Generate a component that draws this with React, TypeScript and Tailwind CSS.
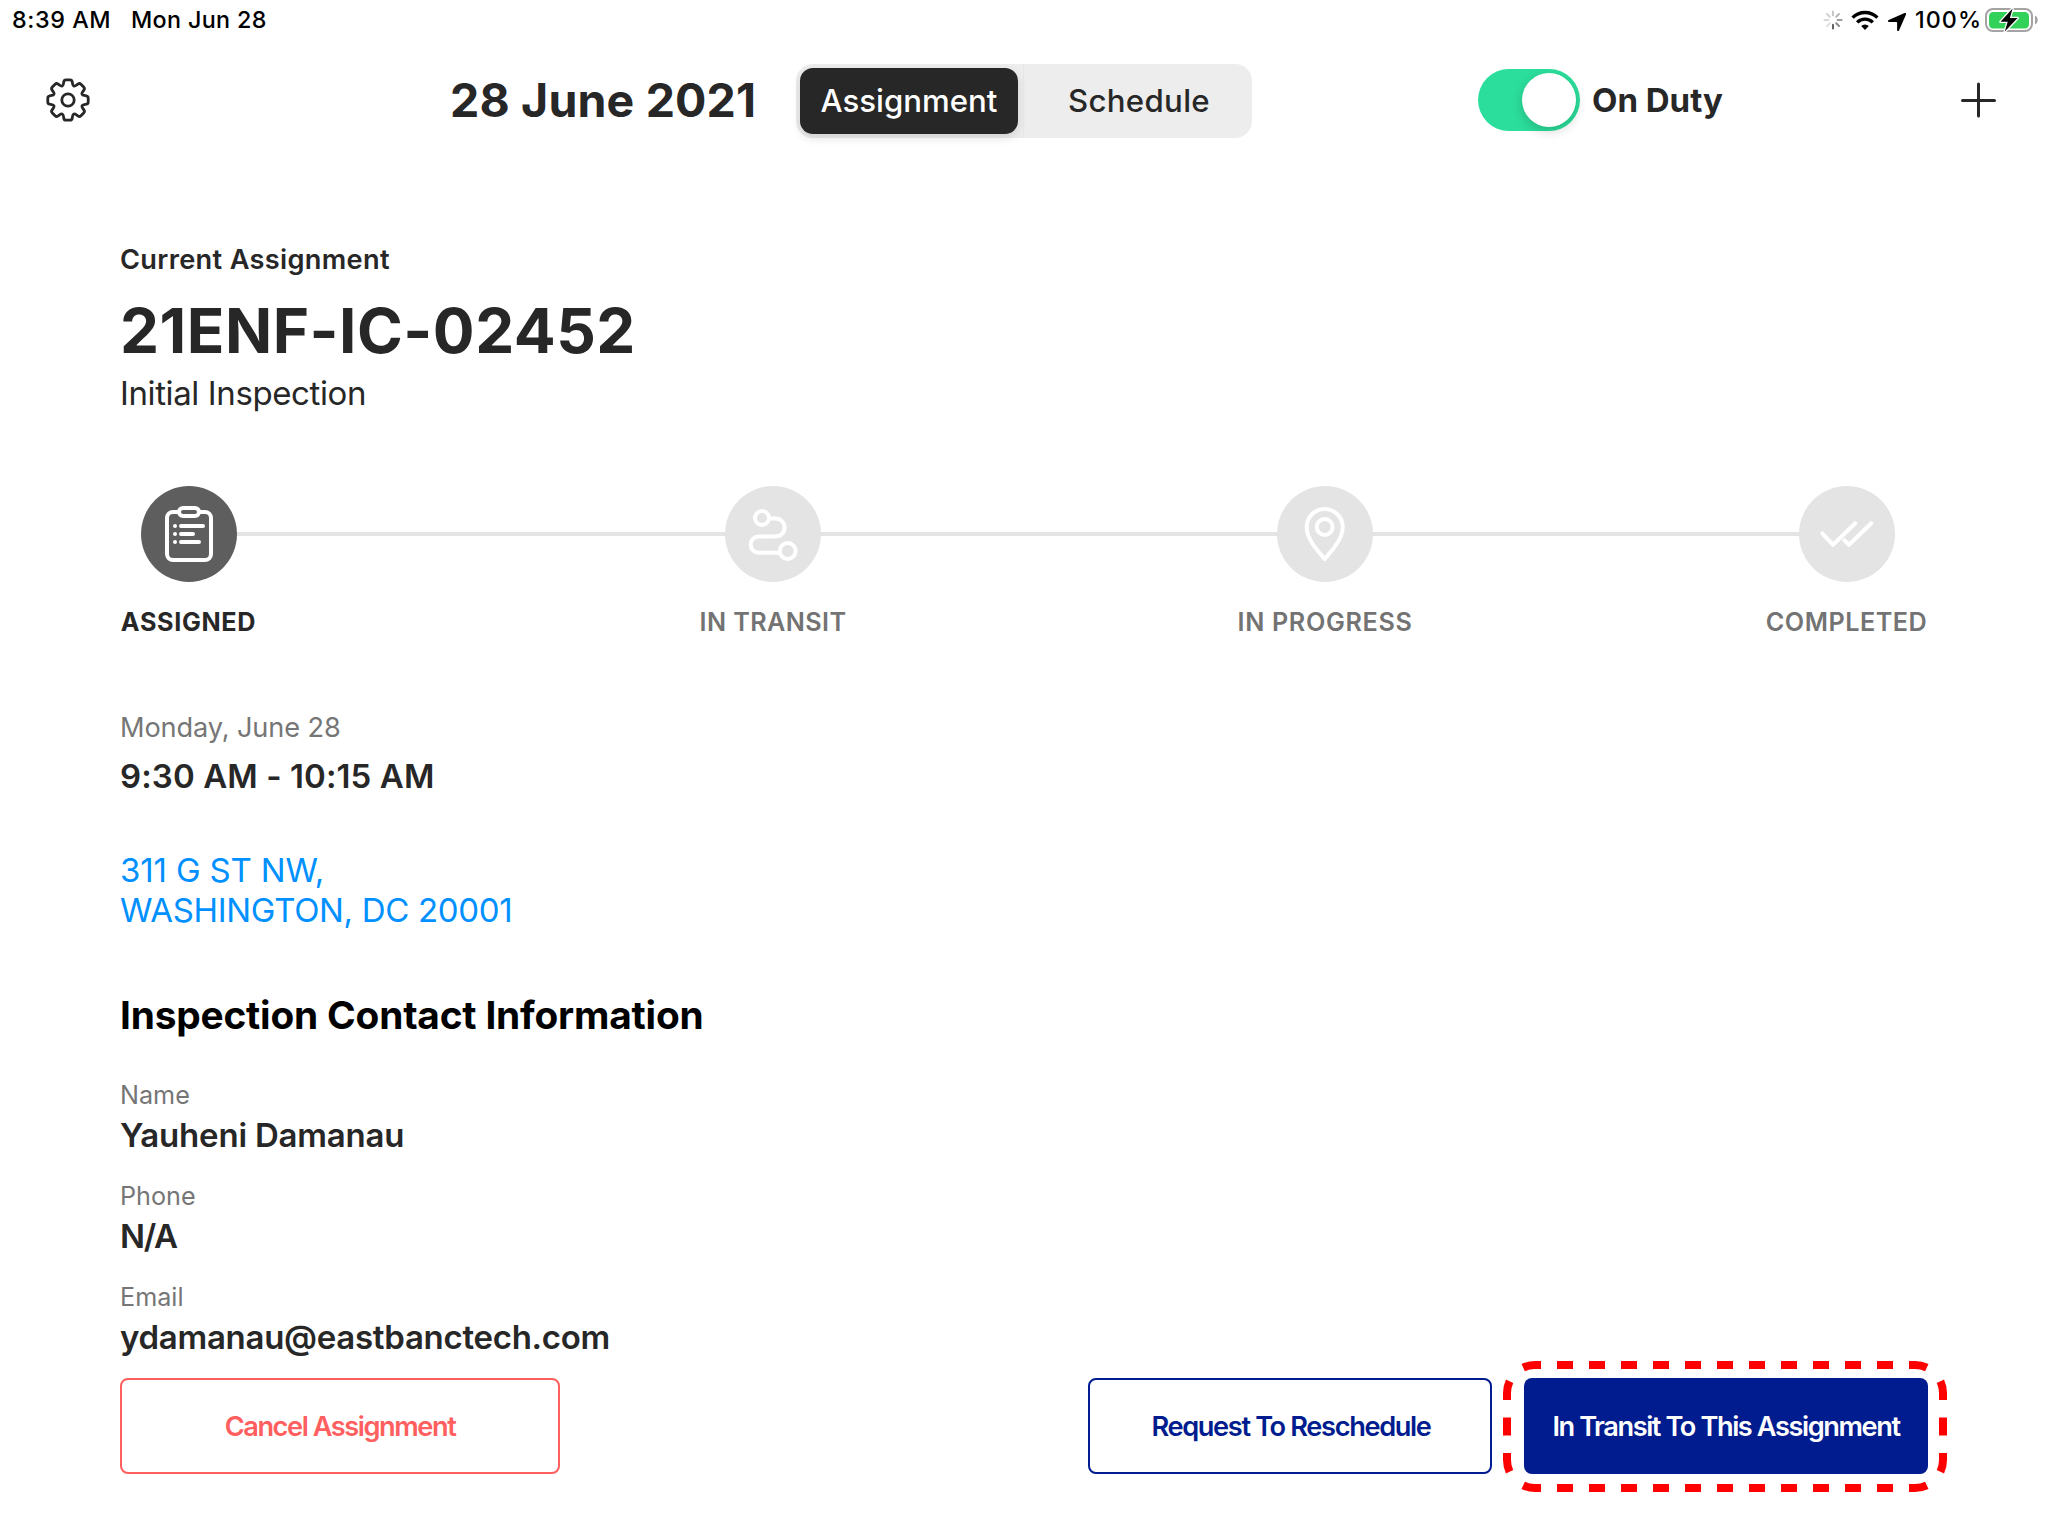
import type { ReactNode } from "react";

type Point = [number, number];

/** Closed polygon whose corners are rounded by `r` along each edge. */
function roundedPolygon(points: Point[], r: number): string {
  const n = points.length;
  const towards = (a: Point, b: Point): Point => {
    const d = Math.hypot(b[0] - a[0], b[1] - a[1]);
    const t = Math.min(r / d, 0.5);
    return [a[0] + (b[0] - a[0]) * t, a[1] + (b[1] - a[1]) * t];
  };
  const parts = points.map((p, i) => {
    const a = towards(p, points[(i + n - 1) % n]);
    const b = towards(p, points[(i + 1) % n]);
    return `${i ? "L" : "M"}${a[0].toFixed(2)} ${a[1].toFixed(2)}Q${p[0].toFixed(2)} ${p[1].toFixed(2)} ${b[0].toFixed(2)} ${b[1].toFixed(2)}`;
  });
  return parts.join("") + "Z";
}

const gearPoints: Point[] = Array.from({ length: 8 }, (_, k) =>
  (
    [
      [-18.5, 15.2],
      [-11, 20.6],
      [11, 20.6],
      [18.5, 15.2],
    ] as Point[]
  ).map(([deg, radius]): Point => {
    const a = ((k * 45 + deg) * Math.PI) / 180;
    return [22 + radius * Math.sin(a), 22 - radius * Math.cos(a)];
  }),
).flat();

const GEAR_PATH = roundedPolygon(gearPoints, 2);

function GearIcon() {
  return (
    <svg viewBox="0 0 44 44" className="size-11" fill="none" stroke="#272727" strokeWidth="2.8" strokeLinejoin="round">
      <path d={GEAR_PATH} />
      <circle cx="22" cy="22" r="6.2" />
    </svg>
  );
}

function PlusIcon() {
  return (
    <svg viewBox="0 0 36 36" className="size-9" stroke="#272727" strokeWidth="3" strokeLinecap="round">
      <path d="M17.500 2v32M1.500 18.500h32" />
    </svg>
  );
}

const SPOKES = ["#c4c4c4", "#b4b4b4", "#9c9c9c", "#858585", "#5a5a5a", "#dedede", "#d8d8d8", "#cfcfcf"];

function SpinnerIcon() {
  return (
    <svg viewBox="0 0 20 20" className="size-5" strokeWidth="1.9" strokeLinecap="round">
      {SPOKES.map((color, i) => (
        <path key={i} d="M10 1.4v4" stroke={color} transform={`rotate(${i * 45} 10 10)`} />
      ))}
    </svg>
  );
}

function WifiIcon() {
  return (
    <svg viewBox="0 0 28 20" className="h-5 w-7" fill="none" stroke="#000" strokeWidth="3.4">
      <path d="M1.6 7.6a17.6 17.6 0 0 1 24.8 0" />
      <path d="M6.2 12.4a11 11 0 0 1 15.6 0" />
      <path d="M14 20l-3.8-3.9a5.4 5.4 0 0 1 7.6 0z" fill="#000" stroke="none" />
    </svg>
  );
}

function LocationIcon() {
  return (
    <svg viewBox="0 0 20 20" className="size-5" fill="#000">
      <path d="M17.6 1.1c1-.4 1.8.4 1.4 1.4l-7 15.9c-.5 1.1-1.9.9-1.9-.3v-7.3c0-.5-.2-.8-.7-.8H2c-1.2 0-1.4-1.4-.3-1.9z" />
    </svg>
  );
}

function BatteryIcon() {
  return (
    <svg viewBox="0 0 54 26" className="h-[26px] w-[54px]">
      <rect x="1" y="2" width="46" height="22" rx="7" fill="none" stroke="#a3a3a3" strokeWidth="2" />
      <rect x="4" y="5" width="40" height="16.6" rx="4.2" fill="#32d15a" />
      <path d="M50 8.6c1.7.7 2.7 2.3 2.7 4.4s-1 3.7-2.7 4.4z" fill="#a3a3a3" />
      <path
        d="M27.6 1.4L15.500 14.800h7.200L19.800 24.600 32.600 11h-7.700z"
        fill="#000"
        stroke="#fff"
        strokeWidth="2.6"
        strokeLinejoin="round"
        paintOrder="stroke"
      />
    </svg>
  );
}

function StatusBar() {
  return (
    <div className="flex h-10 items-center pl-3 text-[23.3px] leading-[39px] font-medium text-black">
      <span className="w-[119px] pb-[2px] tracking-[0.6px]">8:39 AM</span>
      <span className="pb-[2px] tracking-[0.35px]">Mon Jun 28</span>
      <span className="ml-auto">
        <SpinnerIcon />
      </span>
      <span className="ml-2">
        <WifiIcon />
      </span>
      <span className="mt-[3px] ml-2">
        <LocationIcon />
      </span>
      <span className="ml-2 w-[70px] pb-[2px] tracking-[1.05px]">100%</span>
      <span className="mr-[9px]">
        <BatteryIcon />
      </span>
    </div>
  );
}

function Header() {
  return (
    <header className="flex h-30 items-center pr-[51px] pl-[46px] font-bold text-[#272727]">
      <button className="mr-[360px]">
        <GearIcon />
      </button>
      <h1 className="w-[346px] text-[46.5px] leading-14 tracking-[0.16px]">28 June 2021</h1>
      <div className="mt-0.5 flex h-[74px] w-[456px] items-center rounded-[17px] bg-[#ededed] p-1 text-[31.2px] leading-10 font-medium">
        <div className="flex h-[66px] w-[218px] items-center justify-center rounded-[13px] bg-[#272727] text-white shadow-[0_4px_10px_rgba(0,0,0,0.12)]">
          Assignment
        </div>
        <div className="ml-[5px] h-[74px] w-px bg-[#e6e6e6]" />
        <div className="flex flex-1 justify-center pl-1.5 tracking-[0.3px]">Schedule</div>
      </div>
      <button className="ml-[226px] flex h-[62px] w-[102px] items-center justify-end rounded-full bg-[#2bde9b] p-1">
        <span className="size-[54px] rounded-full bg-white shadow-[0_4px_12px_rgba(0,0,0,0.18)]" />
      </button>
      <span className="ml-3 text-[33px] leading-10">On Duty</span>
      <button className="ml-auto">
        <PlusIcon />
      </button>
    </header>
  );
}

function StepCircle({ className, children }: { className: string; children: ReactNode }) {
  return (
    <div className={`row-start-1 size-24 justify-self-center rounded-full ${className}`}>
      <svg viewBox="0 0 96 96" className="size-24" fill="none" stroke="#fff" strokeWidth="4" strokeLinecap="round" strokeLinejoin="round">
        {children}
      </svg>
    </div>
  );
}

function StepLabel({ className, children }: { className: string; children: ReactNode }) {
  return (
    <div className={`row-start-2 justify-self-center text-[25.2px] leading-8 whitespace-nowrap ${className}`}>{children}</div>
  );
}

function Stepper() {
  return (
    <section className="mt-[73px] grid grid-cols-[138px_441px_148px_390px_176px_353px_162px] grid-rows-[96px_32px] gap-y-6">
      <div className="col-span-full col-start-1 row-start-1 mx-20 h-1 self-center bg-[#e4e4e4]" />
      <StepCircle className="col-start-1 bg-[#5e5e5e]">
        <rect x="26" y="26" width="44" height="48" rx="6" />
        <rect x="38" y="22" width="20" height="8" rx="4" fill="#5e5e5e" />
        <path d="M34 40h0M34 48h0M34 56h0M40 40h22M40 48h12M40 56h18" />
      </StepCircle>
      <StepCircle className="col-start-3 bg-[#e4e4e4]">
        <circle cx="37" cy="32" r="7" />
        <circle cx="62.7" cy="65" r="8" />
        <path d="M44 32.4h6.5a9.1 9.1 0 0 1 0 18.2H33.7a8 8 0 0 0 0 16.1H54" />
      </StepCircle>
      <StepCircle className="col-start-5 bg-[#e4e4e4]">
        <circle cx="47.7" cy="41" r="8" />
        <path d="M47.7 73C42 66 29.7 54 29.7 41a18 18 0 0 1 36 0C65.7 54 53.4 66 47.7 73z" />
      </StepCircle>
      <StepCircle className="col-start-7 bg-[#e4e4e4]">
        <path d="M23.3 47.3L34 58.800 56.300 37.300M45.300 54.300L50 58.800 72.300 37.300" />
      </StepCircle>
      <StepLabel className="col-start-1 -ml-px font-bold tracking-[0.65px] text-[#272727]">ASSIGNED</StepLabel>
      <StepLabel className="col-start-3 font-semibold tracking-[0.4px] text-[#737373]">IN TRANSIT</StepLabel>
      <StepLabel className="col-start-5 font-semibold tracking-[0.65px] text-[#737373]">IN PROGRESS</StepLabel>
      <StepLabel className="col-start-7 -ml-px font-semibold tracking-[0.5px] text-[#737373]">COMPLETED</StepLabel>
    </section>
  );
}

function ContactField({ label, value, valueClass }: { label: string; value: string; valueClass: string }) {
  return (
    <div>
      <div className="text-[25.2px] leading-8 text-[#767676]">{label}</div>
      <div className={`mt-1 text-[33px] leading-10 font-semibold ${valueClass}`}>{value}</div>
    </div>
  );
}

const sideDashes = Array.from({ length: 11 }, (_, i) => `M${54 + i * 32} 4h16M${54 + i * 32} 127h16`).join("");

function DashedOutline() {
  return (
    <svg
      viewBox="0 0 444 131"
      className="pointer-events-none absolute -top-[17px] -left-[21px] h-[131px] w-[444px] max-w-none"
      fill="none"
      stroke="#ff0000"
      strokeWidth="8"
    >
      <path d={sideDashes} />
      <path d="M20.2 6.6A28 28 0 0 1 32 4h6M406 4h6a28 28 0 0 1 11.8 2.6M20.2 124.4A28 28 0 0 0 32 127h6M406 127h6a28 28 0 0 0 11.8-2.6" />
      <path d="M6.6 20.2A28 28 0 0 0 4 32v7M4 56.5v18M4 92v7a28 28 0 0 0 2.6 11.8" />
      <path d="M437.4 20.2A28 28 0 0 1 440 32v7M440 56.5v18M440 92v7a28 28 0 0 1-2.6 11.8" />
    </svg>
  );
}

export default function App() {
  return (
    <div className="h-[1536px] w-[2048px] overflow-hidden bg-white font-['Inter',sans-serif] text-[#272727]">
      <StatusBar />
      <Header />
      <main className="px-[120px] pt-[84px]">
        <div className="text-[27.2px] leading-8 font-semibold tracking-[0.32px]">Current Assignment</div>
        <h2 className="mt-[18px] text-[62px] leading-[73px] font-bold tracking-[0.5px]">21ENF-IC-02452</h2>
        <div className="mt-1.5 text-[33px] leading-10 tracking-[-0.39px]">Initial Inspection</div>

        <Stepper />

        <div className="mt-[74px] text-[27.2px] leading-8 tracking-[-0.13px] text-[#767676]">Monday, June 28</div>
        <div className="mt-3 text-[33px] leading-10 font-semibold tracking-[0.09px]">9:30 AM - 10:15 AM</div>
        <address className="mt-[54px] text-[33px] leading-10 text-[#0090ff] not-italic">
          <div className="tracking-[-0.15px]">311 G ST NW,</div>
          <div className="tracking-[-0.33px]">WASHINGTON, DC 20001</div>
        </address>

        <h3 className="mt-[61px] text-[38.8px] leading-[47px] font-bold tracking-[-0.18px] text-black">
          Inspection Contact Information
        </h3>
        <div className="mt-[41px] flex flex-col gap-[25px]">
          <ContactField label="Name" value="Yauheni Damanau" valueClass="tracking-[-0.2px]" />
          <ContactField label="Phone" value="N/A" valueClass="tracking-[-1.4px]" />
          <ContactField label="Email" value="ydamanau@eastbanctech.com" valueClass="tracking-[-0.28px]" />
        </div>

        <div className="mt-[21px] flex h-24 text-[27.2px] leading-8 font-semibold">
          <button className="w-[440px] rounded-lg border-2 border-[#ff5f5f] pt-[2px] tracking-[-1.44px] text-[#ff5f5f]">
            Cancel Assignment
          </button>
          <button className="ml-auto w-[404px] rounded-lg border-2 border-[#001c8e] pt-[2px] pl-0.5 tracking-[-1.35px] text-[#001c8e]">
            Request To Reschedule
          </button>
          <div className="relative ml-8 w-[404px]">
            <button className="size-full rounded-lg bg-[#001c8e] pt-[2px] tracking-[-1.42px] text-white">
              In Transit To This Assignment
            </button>
            <DashedOutline />
          </div>
        </div>
      </main>
    </div>
  );
}
